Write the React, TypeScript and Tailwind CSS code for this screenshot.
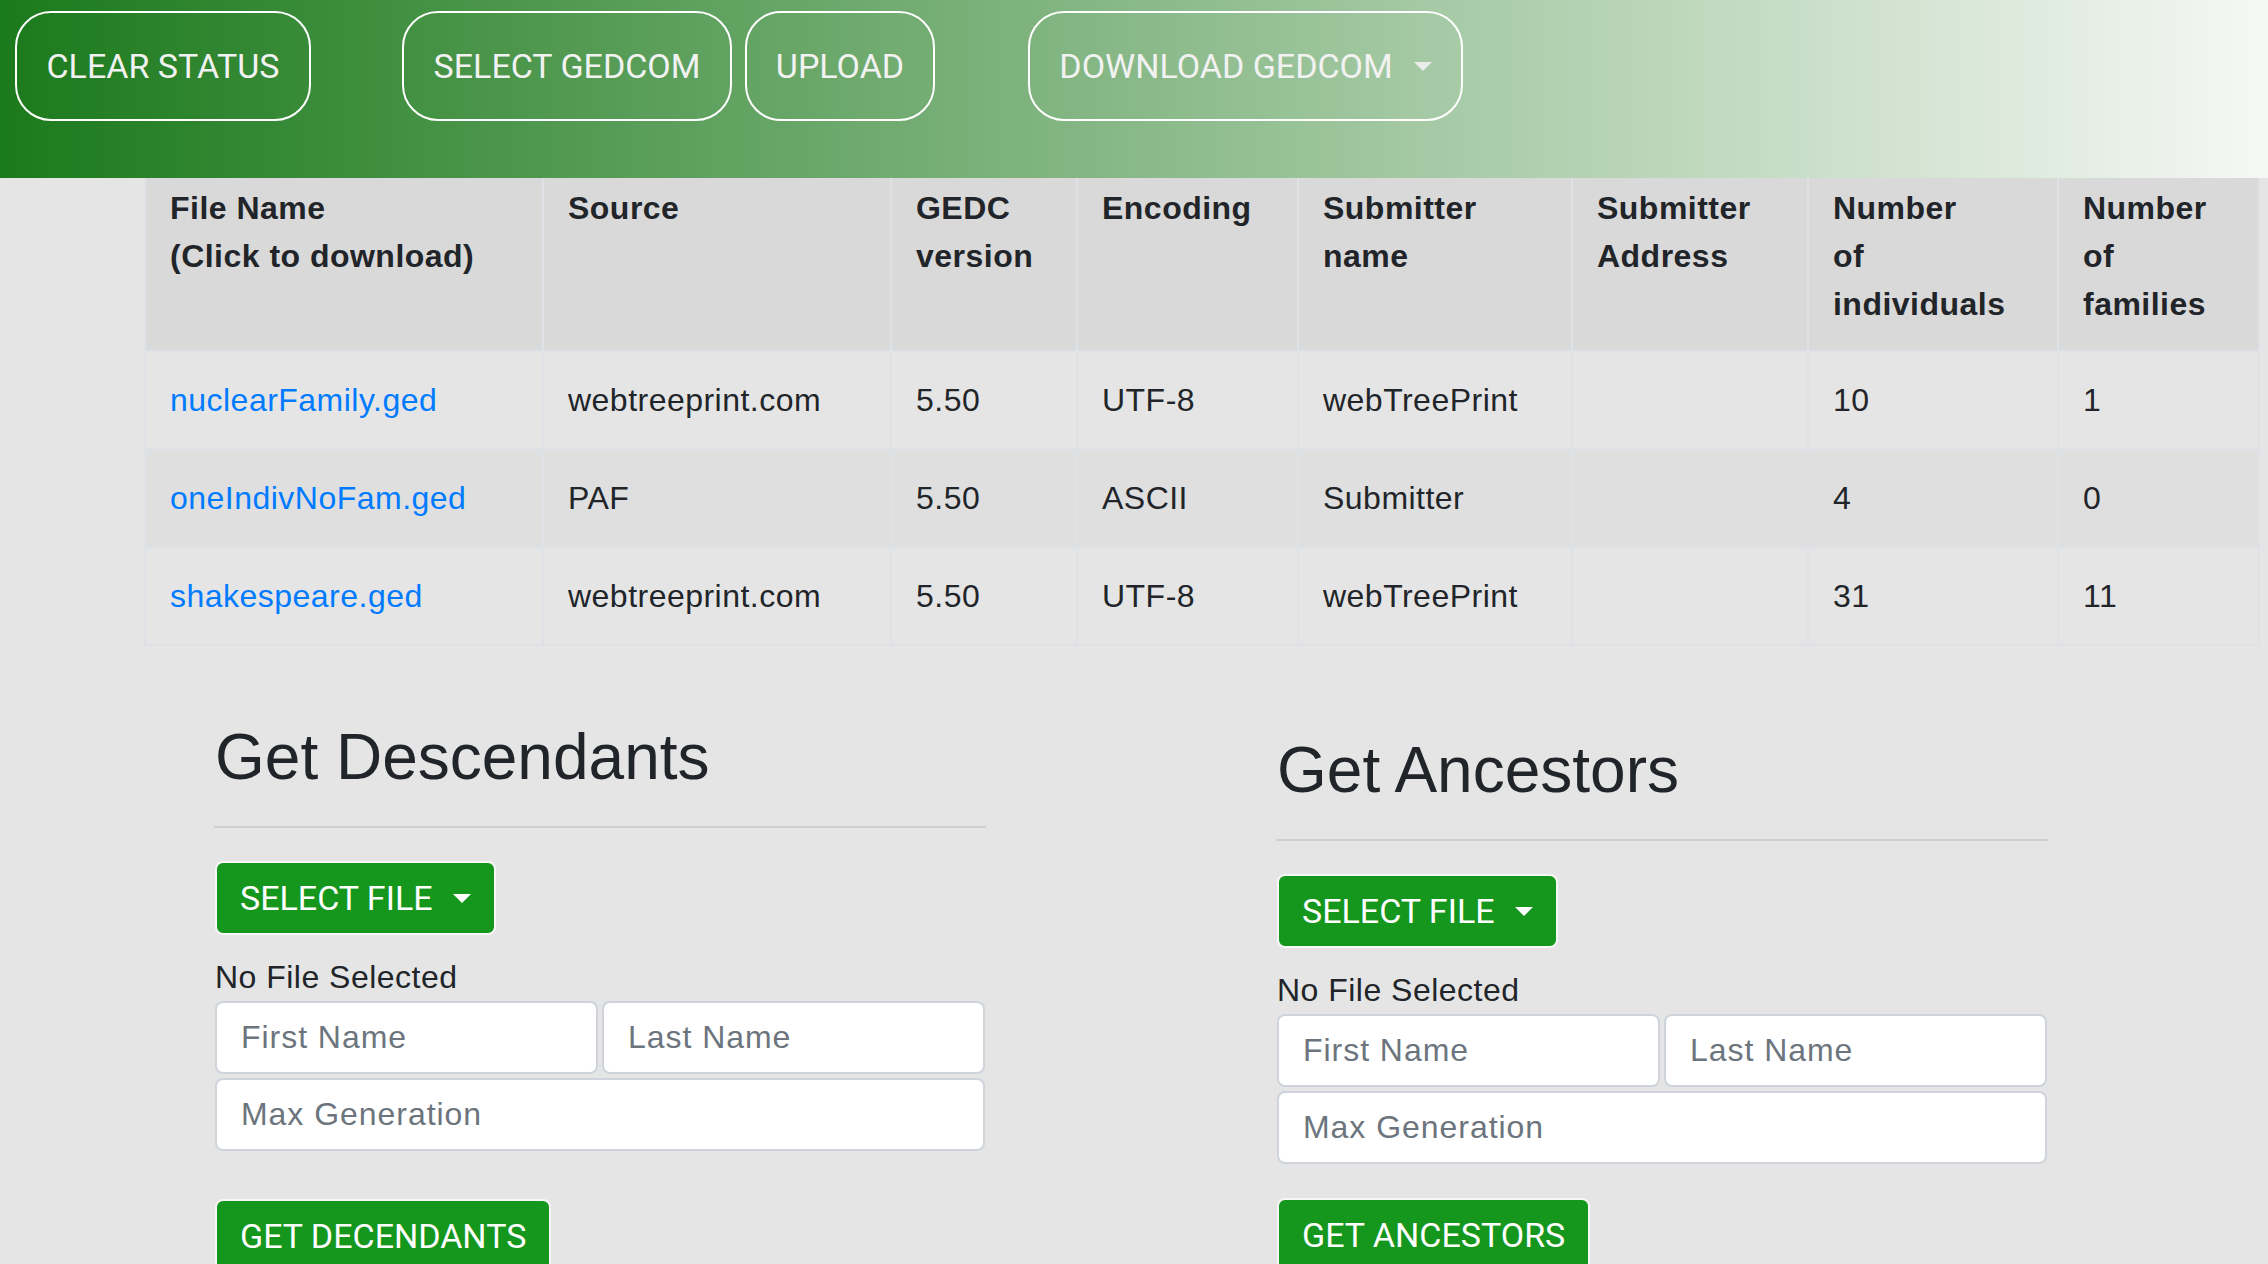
import React from 'react';

interface GedRow {
    file: string;
    source: string;
    version: string;
    encoding: string;
    submitter: string;
    address: string;
    individuals: string;
    families: string;
}

const rows: GedRow[] = [
    { file: 'nuclearFamily.ged', source: 'webtreeprint.com', version: '5.50', encoding: 'UTF-8', submitter: 'webTreePrint', address: '', individuals: '10', families: '1' },
    { file: 'oneIndivNoFam.ged', source: 'PAF', version: '5.50', encoding: 'ASCII', submitter: 'Submitter', address: '', individuals: '4', families: '0' },
    { file: 'shakespeare.ged', source: 'webtreeprint.com', version: '5.50', encoding: 'UTF-8', submitter: 'webTreePrint', address: '', individuals: '31', families: '11' },
];

const colWidths = [398, 348, 186, 221, 274, 236, 250, 201];

function Caret({ className }: { className?: string }) {
    return (
        <span
            className={
                'inline-block w-0 h-0 border-t-[9px] border-x-[9px] border-x-transparent ' + (className ?? '')
            }
        />
    );
}

function HeaderButton({ label, width, caret }: { label: string; width: string; caret?: boolean }) {
    return (
        <button
            className={
                'h-[110px] rounded-[36px] border-2 border-white text-[#f2f2f2] text-[34px] tracking-normal font-["Roboto",sans-serif] flex items-center justify-center gap-[21px] uppercase ' +
                width
            }
        >
            <span>{label}</span>
            {caret && <Caret className="border-t-[#ececec]" />}
        </button>
    );
}

function GreenButton({ label, caret }: { label: string; caret?: boolean }) {
    return (
        <button className='h-[74px] self-start rounded-[8px] border-2 border-[#f7f7f7] bg-[#15961d] px-[23px] text-white text-[34px] tracking-normal font-["Roboto",sans-serif] uppercase flex items-center gap-[20px]'>
            <span>{label}</span>
            {caret && <Caret className="border-t-white" />}
        </button>
    );
}

function SearchPanel({
    title,
    action,
    headingTop,
    actionTop,
}: {
    title: string;
    action: string;
    headingTop: string;
    actionTop: string;
}) {
    return (
        <div className="w-[770px] flex flex-col">
            <h2 className={'text-[64px] leading-[77px] tracking-normal text-[#212529] ' + headingTop}>{title}</h2>
            <hr className="mt-[30px] border-0 h-[2px] bg-[#cfcfcf] -mx-[1px]" />
            <div className="mt-[33px] flex">
                <GreenButton label="Select File" caret />
            </div>
            <p className="mt-[18px] text-[32px] leading-[48px] text-[#212529]">No File Selected</p>
            <div className="flex gap-[4px]">
                <input
                    placeholder="First Name"
                    className="h-[73px] flex-1 min-w-0 rounded-[8px] border-2 border-[#ced4da] bg-white px-[24px] text-[32px] tracking-[0.03em] placeholder:text-[#6c757d] outline-none"
                />
                <input
                    placeholder="Last Name"
                    className="h-[73px] flex-1 min-w-0 rounded-[8px] border-2 border-[#ced4da] bg-white px-[24px] text-[32px] tracking-[0.03em] placeholder:text-[#6c757d] outline-none"
                />
            </div>
            <input
                placeholder="Max Generation"
                className="mt-[4px] h-[73px] rounded-[8px] border-2 border-[#ced4da] bg-white px-[24px] text-[32px] tracking-[0.03em] placeholder:text-[#6c757d] outline-none"
            />
            <div className={'flex ' + actionTop}>
                <GreenButton label={action} />
            </div>
        </div>
    );
}

export default function App() {
    return (
        <div className="h-[1264px] overflow-hidden bg-[#e5e5e5] font-['Liberation_Sans',Arial,sans-serif] tracking-[0.03em] text-[#212529]">
            <header className="h-[178px] bg-[linear-gradient(to_right,#1b7a1b,#f6f8f5)] flex items-start pt-[11px] pl-[15px]">
                <HeaderButton label="Clear Status" width="w-[296px]" />
                <div className="ml-[91px]">
                    <HeaderButton label="Select GEDCOM" width="w-[330px]" />
                </div>
                <div className="ml-[13px]">
                    <HeaderButton label="Upload" width="w-[190px]" />
                </div>
                <div className="ml-[93px]">
                    <HeaderButton label="Download GEDCOM" width="w-[435px]" caret />
                </div>
            </header>

            <table className="ml-[144px] w-[2114px] table-fixed border-collapse text-[32px] leading-[48px]">
                <colgroup>
                    {colWidths.map((w, i) => (
                        <col key={i} style={{ width: w }} />
                    ))}
                </colgroup>
                <thead>
                    <tr className="bg-[#d9d9d9]">
                        <th className="border-x-2 border-b-2 border-[#dee2e6] px-[24px] pt-[6px] pb-[22px] text-left align-top font-bold">
                            File Name<br />(Click to download)
                        </th>
                        <th className="border-x-2 border-b-2 border-[#dee2e6] px-[24px] pt-[6px] pb-[22px] text-left align-top font-bold">
                            Source
                        </th>
                        <th className="border-x-2 border-b-2 border-[#dee2e6] px-[24px] pt-[6px] pb-[22px] text-left align-top font-bold">
                            GEDC<br />version
                        </th>
                        <th className="border-x-2 border-b-2 border-[#dee2e6] px-[24px] pt-[6px] pb-[22px] text-left align-top font-bold">
                            Encoding
                        </th>
                        <th className="border-x-2 border-b-2 border-[#dee2e6] px-[24px] pt-[6px] pb-[22px] text-left align-top font-bold">
                            Submitter<br />name
                        </th>
                        <th className="border-x-2 border-b-2 border-[#dee2e6] px-[24px] pt-[6px] pb-[22px] text-left align-top font-bold">
                            Submitter<br />Address
                        </th>
                        <th className="border-x-2 border-b-2 border-[#dee2e6] px-[24px] pt-[6px] pb-[22px] text-left align-top font-bold">
                            Number<br />of<br />individuals
                        </th>
                        <th className="border-x-2 border-b-2 border-[#dee2e6] px-[24px] pt-[6px] pb-[22px] text-left align-top font-bold">
                            Number<br />of<br />families
                        </th>
                    </tr>
                </thead>
                <tbody>
                    {rows.map((r, i) => (
                        <tr key={r.file} className={i % 2 === 1 ? 'bg-[#dfdfdf]' : 'bg-[#e5e5e5]'}>
                            <td className="border-2 border-[#dee2e6] px-[24px] py-[24px]">
                                <a href="#" className="text-[#007bff]">
                                    {r.file}
                                </a>
                            </td>
                            <td className="border-2 border-[#dee2e6] px-[24px] py-[24px]">{r.source}</td>
                            <td className="border-2 border-[#dee2e6] px-[24px] py-[24px]">{r.version}</td>
                            <td className="border-2 border-[#dee2e6] px-[24px] py-[24px]">{r.encoding}</td>
                            <td className="border-2 border-[#dee2e6] px-[24px] py-[24px]">{r.submitter}</td>
                            <td className="border-2 border-[#dee2e6] px-[24px] py-[24px]">{r.address}</td>
                            <td className="border-2 border-[#dee2e6] px-[24px] py-[24px]">{r.individuals}</td>
                            <td className="border-2 border-[#dee2e6] px-[24px] py-[24px]">{r.families}</td>
                        </tr>
                    ))}
                </tbody>
            </table>

            <div className="flex pl-[215px] gap-[292px]">
                <SearchPanel title="Get Descendants" action="Get Decendants" headingTop="mt-[73px]" actionTop="mt-[48px]" />
                <SearchPanel title="Get Ancestors" action="Get Ancestors" headingTop="mt-[86px]" actionTop="mt-[34px]" />
            </div>
        </div>
    );
}
